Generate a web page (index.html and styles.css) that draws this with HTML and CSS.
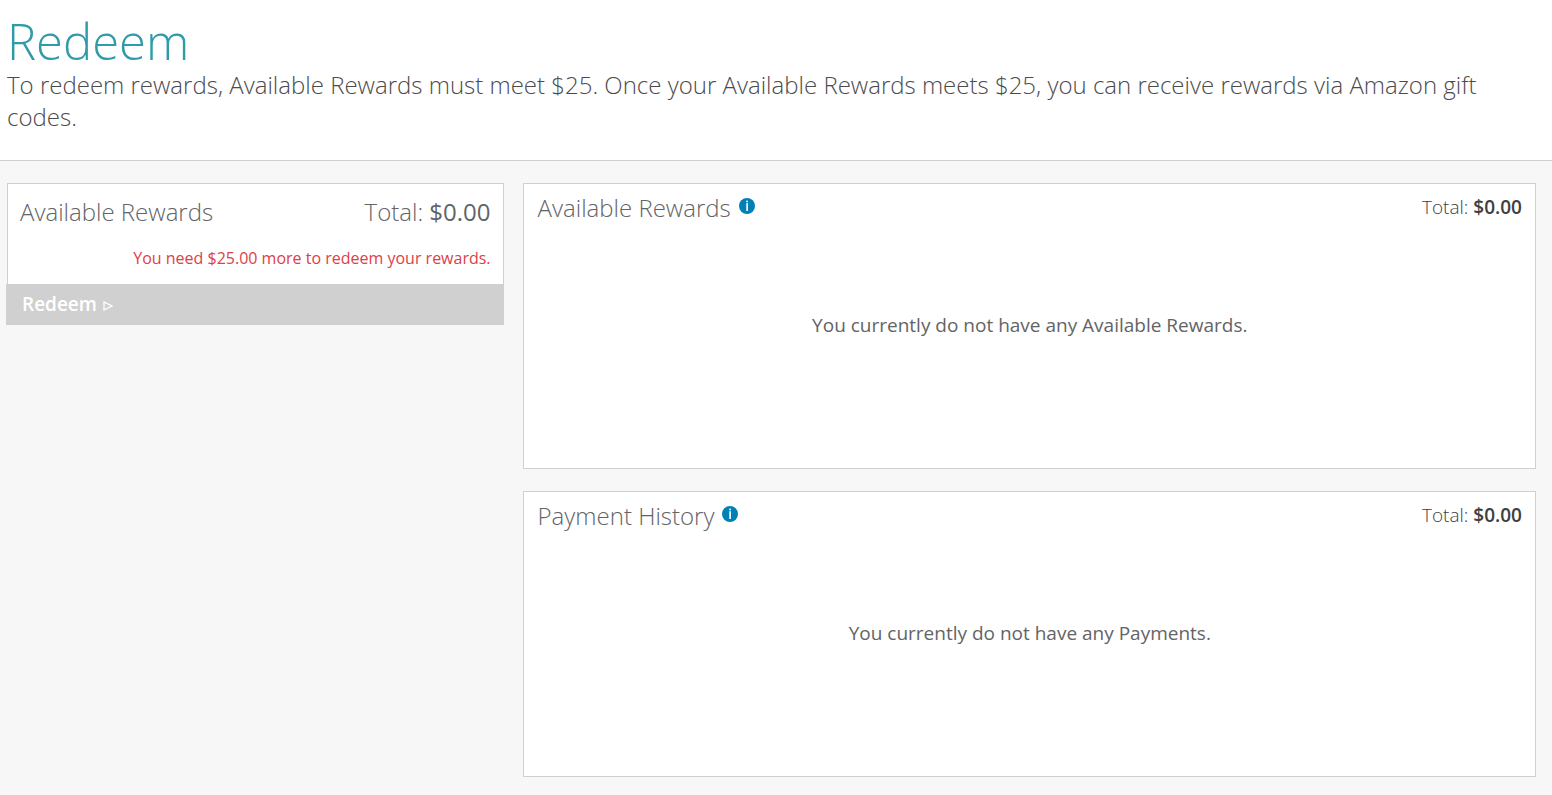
FILE: index.html
```html
<!DOCTYPE html>
<html lang="en">

<head>
    <meta charset="UTF-8">
    <meta name="viewport" content="width=device-width, initial-scale=1.0">
    <title>Redeem</title>
    <link rel="stylesheet" href="styles.css">
</head>

<body>
    <!-- Page header -->
    <header class="page-header">
        <h1>Redeem</h1>
        <p>To redeem rewards, Available Rewards must meet $25. Once your Available Rewards meets $25, you can receive rewards via Amazon gift codes.</p>
    </header>

    <main class="content">
        <!-- Redeem box -->
        <section class="redeem-box">
            <div class="redeem-summary">
                <div class="redeem-row">
                    <h2>Available Rewards</h2>
                    <div class="redeem-total">Total: <span class="redeem-amount">$0.00</span></div>
                </div>
                <p class="redeem-warning">You need $25.00 more to redeem your rewards.</p>
            </div>
            <button type="button" class="redeem-button" disabled>
                <span>Redeem</span>
                <svg class="arrow" viewBox="0 0 10 10" aria-hidden="true">
                    <path d="M1 1 L9 5 L1 9 Z" />
                </svg>
            </button>
        </section>

        <div class="panels">
            <!-- Available rewards -->
            <section class="panel">
                <div class="panel-header">
                    <h2>Available Rewards</h2>
                    <button type="button" class="info" aria-label="About Available Rewards">
                        <svg viewBox="0 0 16 16" aria-hidden="true">
                            <circle cx="8" cy="8" r="8" />
                            <rect x="7.3" y="2.6" width="1.6" height="1.7" />
                            <rect x="7.3" y="5.2" width="1.6" height="7.8" />
                        </svg>
                    </button>
                    <div class="panel-total">Total: <strong>$0.00</strong></div>
                </div>
                <p class="panel-empty">You currently do not have any Available Rewards.</p>
            </section>

            <!-- Payment history -->
            <section class="panel">
                <div class="panel-header">
                    <h2>Payment History</h2>
                    <button type="button" class="info" aria-label="About Payment History">
                        <svg viewBox="0 0 16 16" aria-hidden="true">
                            <circle cx="8" cy="8" r="8" />
                            <rect x="7.3" y="2.6" width="1.6" height="1.7" />
                            <rect x="7.3" y="5.2" width="1.6" height="7.8" />
                        </svg>
                    </button>
                    <div class="panel-total">Total: <strong>$0.00</strong></div>
                </div>
                <p class="panel-empty">You currently do not have any Payments.</p>
            </section>
        </div>
    </main>
</body>

</html>
```

FILE: styles.css
```css
/* Reset and base styles */
* {
    box-sizing: border-box;
}

body {
    margin: 0;
    background-color: #f7f7f7;
    color: #636466;
    font-family: "Open Sans", sans-serif;
    font-size: 19px;
    font-weight: 400;
}

h1,
h2,
p {
    margin: 0;
}

h1,
h2 {
    font-weight: 300;
}

h2 {
    font-size: 24px;
    line-height: 32px;
}

button {
    border: none;
    padding: 0;
    font-family: inherit;
}

/* Page header */
.page-header {
    padding: 13px 7px 27px;
    background-color: #fff;
    border-bottom: 1px solid #d0d0d0;
}

.page-header h1 {
    color: #2f9ba8;
    font-size: 49px;
    line-height: 56px;
}

.page-header p {
    color: #4b4b4d;
    font-size: 24px;
    font-weight: 300;
    line-height: 32px;
}

/* Two columns */
.content {
    display: grid;
    grid-template-columns: 49fr 100fr;
    align-items: start;
    gap: 19px;
    padding: 22px 16px 17px 7px;
}

/* Redeem box */
.redeem-box {
    display: flex;
    flex-direction: column;
}

.redeem-summary {
    padding: 12px 12px 12px;
    background-color: #fff;
    border: 1px solid #d0d0d0;
    border-bottom: none;
}

.redeem-row {
    display: flex;
    justify-content: space-between;
}

.redeem-total {
    font-size: 24px;
    font-weight: 300;
    line-height: 32px;
}

.redeem-amount {
    font-weight: 400;
}

.redeem-warning {
    margin-top: 16px;
    color: #dd4048;
    font-size: 16px;
    line-height: 28px;
    text-align: right;
}

.redeem-button {
    display: flex;
    align-items: center;
    gap: 6px;
    height: 41px;
    margin-left: -1px;
    padding: 0 16px 2px;
    background-color: #d0d0d0;
    color: #fff;
    font-size: 19px;
    font-weight: 600;
}

.arrow {
    width: 10px;
    height: 10px;
    margin-top: 4px;
    fill: none;
    stroke: #fff;
    stroke-width: 1.3;
}

/* Panels */
.panels {
    display: grid;
    gap: 22px;
}

.panel {
    display: flex;
    flex-direction: column;
    min-height: 286px;
    padding: 8px 13px 8px 14px;
    background-color: #fff;
    border: 1px solid #d0d0d0;
}

.panel-header {
    display: flex;
    align-items: flex-start;
}

.info {
    width: 16px;
    height: 16px;
    margin: 6px 0 0 8px;
    background: none;
    cursor: pointer;
}

.info svg {
    display: block;
}

.info circle {
    fill: #0080b5;
}

.info rect {
    fill: #fff;
}

.panel-total {
    margin-left: auto;
    color: #404041;
    font-weight: 300;
    line-height: 30px;
}

.panel-total strong {
    font-weight: 600;
}

.panel-empty {
    margin: auto;
    padding-bottom: 34px;
    line-height: 26px;
    text-align: center;
}
```
